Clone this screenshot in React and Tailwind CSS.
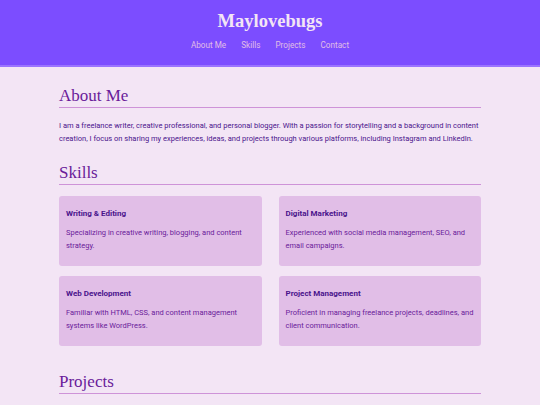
import React from 'react';

const skills = [
  { title: 'Writing & Editing', text: 'Specializing in creative writing, blogging, and content strategy.' },
  { title: 'Digital Marketing', text: 'Experienced with social media management, SEO, and email campaigns.' },
  { title: 'Web Development', text: 'Familiar with HTML, CSS, and content management systems like WordPress.' },
  { title: 'Project Management', text: 'Proficient in managing freelance projects, deadlines, and client communication.' },
];

function SectionTitle({ children }) {
  return (
    <h2 className="text-[17px] leading-[22px] text-[#6a1b9a] font-['Liberation_Serif',serif] border-b border-[#ce93d8] pb-0 mb-[11px]">
      {children}
    </h2>
  );
}

export default function App() {
  return (
    <div className="min-h-screen bg-[#f3e5f5] font-['Roboto',sans-serif]">
      {/* Шапка */}
      <header className="bg-[#7c4dff] border-b-2 border-[#9a73ff] pt-[8px] pb-[14px] text-center">
        <h1 className="text-[18.5px] leading-[26px] font-bold text-[#f3e5f5] font-['Liberation_Serif',serif]">
          Maylovebugs
        </h1>
        <nav className="mt-[5px] flex justify-center gap-[15px] text-[8.2px] leading-[12px] text-[#e1bee7]">
          <a href="#about">About Me</a>
          <a href="#skills">Skills</a>
          <a href="#projects">Projects</a>
          <a href="#contact">Contact</a>
        </nav>
      </header>

      <main className="max-w-[422px] mx-auto pt-[18px]">
        <section id="about" className="mb-[17px]">
          <SectionTitle>About Me</SectionTitle>
          <p className="text-[7.5px] leading-[13px] text-[#4a148c]">
            I am a freelance writer, creative professional, and personal blogger. With a passion for storytelling and a background in content creation, I focus on sharing my experiences, ideas, and projects through various platforms, including Instagram and LinkedIn.
          </p>
        </section>

        <section id="skills" className="mb-[25px]">
          <SectionTitle>Skills</SectionTitle>
          <div className="grid grid-cols-2 gap-x-[17px] gap-y-[10px]">
            {skills.map((s) => (
              <div key={s.title} className="bg-[#e1bee7] rounded-[3px] h-[70px] px-[7px] pt-[12px]">
                <h3 className="text-[8px] leading-[12px] font-bold text-[#4a148c]">{s.title}</h3>
                <p className="mt-[6px] text-[7.5px] leading-[13px] text-[#6a1b9a]">{s.text}</p>
              </div>
            ))}
          </div>
        </section>

        <section id="projects">
          <SectionTitle>Projects</SectionTitle>
        </section>
      </main>
    </div>
  );
}
